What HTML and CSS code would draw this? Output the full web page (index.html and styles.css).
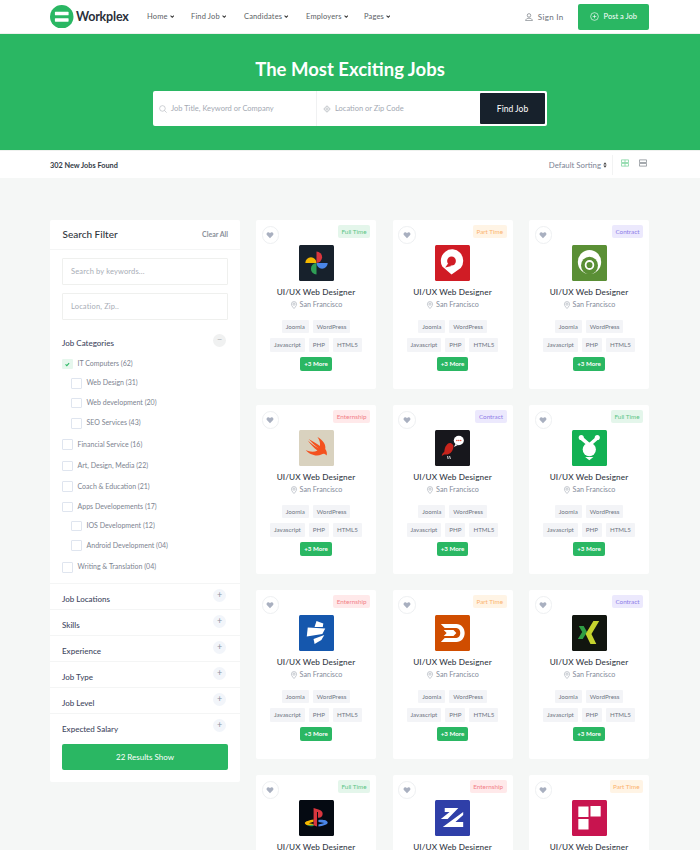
FILE: index.html
```html
<!DOCTYPE html>
<html lang="en">
<head>
<meta charset="utf-8">
<title>Workplex</title>
<link rel="stylesheet" href="styles.css">
</head>
<body>
<svg class="defs" width="0" height="0" aria-hidden="true">
  <symbol id="heart" viewBox="0 0 16 16"><path d="M8 14.500 2.200 8.600C.5 6.800.9 3.800 3 2.800c1.900-.9 3.700-.1 5 1.700 1.300-1.800 3.100-2.600 5-1.700 2.100 1 2.500 4 .8 5.800z"/></symbol>
  <symbol id="pin" viewBox="0 0 16 16"><path d="M8 15S2.800 10 2.800 6.300a5.200 5.200 0 0 1 10.400 0C13.200 10 8 15 8 15z" fill="none" stroke="currentColor" stroke-width="1.100"/><circle cx="8" cy="6.300" r="2.200" fill="none" stroke="currentColor" stroke-width="1.100"/></symbol>
  <symbol id="chev" viewBox="0 0 8 8"><path d="M1 2.500 4 5.500 7 2.500" fill="none" stroke="currentColor" stroke-width="1.800"/></symbol>
</svg>

<header class="topbar">
  <div class="brand">
    <svg class="brand-mark" viewBox="0 0 24 24"><circle cx="12" cy="12" r="12" fill="#2ab763"/><rect x="5" y="7" width="14" height="3.500" rx=".6" fill="#fff"/><rect x="5" y="13.500" width="14" height="3.500" rx=".6" fill="#fff"/></svg>
    <span class="brand-name">Workplex</span>
  </div>
  <nav class="nav">
    <a class="nav-home">Home <svg class="chev"><use href="#chev"/></svg></a>
    <a class="nav-find">Find Job <svg class="chev"><use href="#chev"/></svg></a>
    <a class="nav-cand">Candidates <svg class="chev"><use href="#chev"/></svg></a>
    <a class="nav-emp">Employers <svg class="chev"><use href="#chev"/></svg></a>
    <a>Pages <svg class="chev"><use href="#chev"/></svg></a>
  </nav>
  <a class="signin">
    <svg class="signin-icon" viewBox="0 0 10 10"><circle cx="5" cy="3" r="2.200" fill="none" stroke="currentColor" stroke-width=".8"/><path d="M.8 9.500c.3-2.200 2-3 4.200-3s3.900.8 4.200 3z" fill="none" stroke="currentColor" stroke-width=".8"/></svg>
    Sign In
  </a>
  <a class="post">
    <svg class="post-icon" viewBox="0 0 10 10"><circle cx="5" cy="5" r="4.300" fill="none" stroke="currentColor" stroke-width=".7"/><path d="M5 3v4M3 5h4" stroke="currentColor" stroke-width=".7"/></svg>
    Post a Job
  </a>
</header>

<section class="hero">
  <h1>The Most Exciting Jobs</h1>
  <form class="search">
    <div class="search-field search-title">
      <svg class="search-icon" viewBox="0 0 10 10"><circle cx="4.300" cy="4.300" r="3.500" fill="none" stroke="currentColor" stroke-width=".7"/><path d="M7 7l2.500 2.500" stroke="currentColor" stroke-width=".7"/></svg>
      <span>Job Title, Keyword or Company</span>
    </div>
    <div class="search-field search-loc">
      <svg class="search-icon" viewBox="0 0 10 10"><circle cx="5" cy="5" r="3" fill="none" stroke="currentColor" stroke-width=".8"/><circle cx="5" cy="5" r="1.200" fill="none" stroke="currentColor" stroke-width=".7"/><path d="M5 .5v1.500M5 8v1.500M.5 5H2M8 5h1.500" stroke="currentColor" stroke-width=".7"/></svg>
      <span>Location or Zip Code</span>
    </div>
    <button class="find" type="button">Find Job</button>
  </form>
</section>

<section class="resultbar">
  <strong class="found">302 New Jobs Found</strong>
  <div class="sorting">Default Sorting
    <svg class="updown" viewBox="0 0 6 8"><path d="M3 0 5.500 3.400H.5zM3 8 .5 4.600h5z"/></svg>
  </div>
  <div class="views">
    <svg class="view-icon view-on" viewBox="0 0 9 8"><path d="M.5.500h8v3h-8zM.5 4.500h8v3h-8zM4.500.500v3M4.500 4.500v3" fill="none" stroke="currentColor" stroke-width=".9"/></svg>
    <svg class="view-icon" viewBox="0 0 9 8"><path d="M.5.500h8v3h-8zM.5 4.500h8v3h-8z" fill="none" stroke="currentColor" stroke-width=".9"/></svg>
  </div>
</section>

<main class="content">
  <aside class="filter">
    <div class="filter-head">
      <h2>Search Filter</h2>
      <a class="clear">Clear All</a>
    </div>
    <div class="filter-inputs">
      <div class="text-box">Search by keywords...</div>
      <div class="text-box">Location, Zip..</div>
    </div>
    <div class="cat-block">
      <div class="cat-head"><h3>Job Categories</h3><span class="round round-minus">&#8722;</span></div>
      <ul class="cat-list">
        <li class="row row-first"><span class="box box-on"><svg viewBox="0 0 10 10"><path d="M3 5.200 4.500 6.700 7.200 3.600" fill="none" stroke="#2ab763" stroke-width="1.200"/></svg></span>IT Computers (62)</li>
        <li class="row sub sub-a"><span class="box"></span>Web Design (31)</li>
        <li class="row sub"><span class="box"></span>Web development (20)</li>
        <li class="row sub"><span class="box"></span>SEO Services (43)</li>
        <li class="row row-after"><span class="box"></span>Financial Service (16)</li>
        <li class="row"><span class="box"></span>Art, Design, Media (22)</li>
        <li class="row"><span class="box"></span>Coach &amp; Education (21)</li>
        <li class="row row-tight"><span class="box"></span>Apps Developements (17)</li>
        <li class="row sub sub-a"><span class="box"></span>IOS Development (12)</li>
        <li class="row sub"><span class="box"></span>Android Development (04)</li>
        <li class="row row-last"><span class="box"></span>Writing &amp; Translation (04)</li>
      </ul>
    </div>
    <div class="acc"><h3>Job Locations</h3><span class="round">+</span></div>
    <div class="acc"><h3>Skills</h3><span class="round">+</span></div>
    <div class="acc"><h3>Experience</h3><span class="round">+</span></div>
    <div class="acc"><h3>Job Type</h3><span class="round">+</span></div>
    <div class="acc"><h3>Job Level</h3><span class="round">+</span></div>
    <div class="acc"><h3>Expected Salary</h3><span class="round">+</span></div>
    <button class="results" type="button">22 Results Show</button>
  </aside>

  <div class="cards">

    <article class="card">
      <span class="fav"><svg><use href="#heart"/></svg></span><span class="badge full">Full Time</span>
      <svg class="logo" viewBox="0 0 36 36" preserveAspectRatio="none"><rect width="36" height="36" rx="1.500" fill="#17212c"/><path d="M6.500 18A5.750 5.750 0 0 1 18 18z" fill="#f5b800"/><path d="M18 6.500A5.750 5.750 0 0 1 18 18z" fill="#d9363e"/><path d="M29.500 18A5.750 5.750 0 0 1 18 18z" fill="#4a86e8"/><path d="M18 29.500A5.750 5.750 0 0 1 18 18z" fill="#2f9e55"/></svg>
      <h4>UI/UX Web Designer</h4>
      <p class="place"><svg><use href="#pin"/></svg>San Francisco</p>
      <div class="tags"><span>Joomla</span><span>WordPress</span><span>Javascript</span><span>PHP</span><span>HTML5</span><span class="more">+3 More</span></div>
    </article>

    <article class="card">
      <span class="fav"><svg><use href="#heart"/></svg></span><span class="badge part">Part Time</span>
      <svg class="logo" viewBox="0 0 36 36" preserveAspectRatio="none"><rect width="36" height="36" rx="1.500" fill="#d01c25"/><path d="M17 29.500 7.500 21.500A11.500 11.500 0 1 1 26.500 23z" fill="#fff"/><circle cx="17" cy="16" r="4.500" fill="#d01c25"/><path d="M13.500 18.500 10.500 22.500 17 21z" fill="#d01c25"/></svg>
      <h4>UI/UX Web Designer</h4>
      <p class="place"><svg><use href="#pin"/></svg>San Francisco</p>
      <div class="tags"><span>Joomla</span><span>WordPress</span><span>Javascript</span><span>PHP</span><span>HTML5</span><span class="more">+3 More</span></div>
    </article>

    <article class="card">
      <span class="fav"><svg><use href="#heart"/></svg></span><span class="badge contract">Contract</span>
      <svg class="logo" viewBox="0 0 36 36" preserveAspectRatio="none"><rect width="36" height="36" rx="1.500" fill="#5a8f35"/><circle cx="18" cy="17" r="12" fill="#fff"/><circle cx="18" cy="20.500" r="8.700" fill="#5a8f35"/><circle cx="18" cy="20" r="4" fill="none" stroke="#fff" stroke-width="1.800"/></svg>
      <h4>UI/UX Web Designer</h4>
      <p class="place"><svg><use href="#pin"/></svg>San Francisco</p>
      <div class="tags"><span>Joomla</span><span>WordPress</span><span>Javascript</span><span>PHP</span><span>HTML5</span><span class="more">+3 More</span></div>
    </article>

    <article class="card">
      <span class="fav"><svg><use href="#heart"/></svg></span><span class="badge intern">Enternship</span>
      <svg class="logo" viewBox="0 0 36 36" preserveAspectRatio="none"><rect width="36" height="36" rx="1.500" fill="#d9d2bf"/><path d="M10 9c3 3.500 7 7 10.500 9.500C16.500 16.500 12 13 9 10.500c3 4 7 8 10 10-3.500 1.800-8 1.500-12-.5 3.500 4.500 11 7 16 4.500 2-1 3.500-1 5.500 1 .5-2.500 0-4.500-1.500-6.500 1-4-2-8.500-8-12 2.500 3.500 3 6.500 2.500 9C18.500 14 14 11 10 9z" fill="#f4511e"/></svg>
      <h4>UI/UX Web Designer</h4>
      <p class="place"><svg><use href="#pin"/></svg>San Francisco</p>
      <div class="tags"><span>Joomla</span><span>WordPress</span><span>Javascript</span><span>PHP</span><span>HTML5</span><span class="more">+3 More</span></div>
    </article>

    <article class="card">
      <span class="fav"><svg><use href="#heart"/></svg></span><span class="badge contract">Contract</span>
      <svg class="logo" viewBox="0 0 36 36" preserveAspectRatio="none"><rect width="36" height="36" rx="1.500" fill="#17171c"/><path d="M7 26c0-2 1-3 2.500-4 .5-3 .5-5 2.500-7 1-1.500 3-2.500 5-1.500 2 1 2.500 3 1.500 5.500-1 3-3.500 5.500-6.500 5.500H9.500z" fill="#c8241c"/><path d="M13 26l.5 3M15 26l.8 3" stroke="#fff" stroke-width=".9"/><ellipse cx="24.500" cy="10.500" rx="5.200" ry="4.700" fill="#fff"/><path d="M21 14l-1.500 3 4-2z" fill="#fff"/><circle cx="22.500" cy="10.500" r=".7" fill="#d8402a"/><circle cx="24.500" cy="10.500" r=".7" fill="#d8402a"/><circle cx="26.500" cy="10.500" r=".7" fill="#d8402a"/></svg>
      <h4>UI/UX Web Designer</h4>
      <p class="place"><svg><use href="#pin"/></svg>San Francisco</p>
      <div class="tags"><span>Joomla</span><span>WordPress</span><span>Javascript</span><span>PHP</span><span>HTML5</span><span class="more">+3 More</span></div>
    </article>

    <article class="card">
      <span class="fav"><svg><use href="#heart"/></svg></span><span class="badge full">Full Time</span>
      <svg class="logo" viewBox="0 0 36 36" preserveAspectRatio="none"><rect width="36" height="36" rx="1.500" fill="#12b153"/><path d="M9.500 8 17.800 15 26 8" fill="none" stroke="#fff" stroke-width="3.600"/><circle cx="9.500" cy="7.500" r="2.600" fill="#fff"/><circle cx="26" cy="7.500" r="2.600" fill="#fff"/><circle cx="17.800" cy="19.500" r="6.800" fill="#fff"/><path d="M13.500 27h8.500l-4.200 3.200z" fill="#fff"/></svg>
      <h4>UI/UX Web Designer</h4>
      <p class="place"><svg><use href="#pin"/></svg>San Francisco</p>
      <div class="tags"><span>Joomla</span><span>WordPress</span><span>Javascript</span><span>PHP</span><span>HTML5</span><span class="more">+3 More</span></div>
    </article>

    <article class="card">
      <span class="fav"><svg><use href="#heart"/></svg></span><span class="badge intern">Enternship</span>
      <svg class="logo" viewBox="0 0 36 36" preserveAspectRatio="none"><rect width="36" height="36" rx="1.500" fill="#1557ad"/><path d="M18 6l7 2.500-.5 3.500H16z" fill="#fff"/><path d="M9 12.500l18 1-3 5.500-16 2.500z" fill="#fff"/><path d="M15 24l11-4-3 5-7 4z" fill="#fff"/></svg>
      <h4>UI/UX Web Designer</h4>
      <p class="place"><svg><use href="#pin"/></svg>San Francisco</p>
      <div class="tags"><span>Joomla</span><span>WordPress</span><span>Javascript</span><span>PHP</span><span>HTML5</span><span class="more">+3 More</span></div>
    </article>

    <article class="card">
      <span class="fav"><svg><use href="#heart"/></svg></span><span class="badge part">Part Time</span>
      <svg class="logo" viewBox="0 0 36 36" preserveAspectRatio="none"><rect width="36" height="36" rx="1.500" fill="#d04d00"/><path d="M6 9h16c5 0 8.500 4 8.500 9s-3.500 9-8.500 9H6l4-4h12c2.500 0 4-2.200 4-5s-1.500-5-4-5H10z" fill="#fff"/><path d="M9 15h10l3 3-3 3H9l3-3z" fill="#fff"/></svg>
      <h4>UI/UX Web Designer</h4>
      <p class="place"><svg><use href="#pin"/></svg>San Francisco</p>
      <div class="tags"><span>Joomla</span><span>WordPress</span><span>Javascript</span><span>PHP</span><span>HTML5</span><span class="more">+3 More</span></div>
    </article>

    <article class="card">
      <span class="fav"><svg><use href="#heart"/></svg></span><span class="badge contract">Contract</span>
      <svg class="logo" viewBox="0 0 36 36" preserveAspectRatio="none"><rect width="36" height="36" rx="1.500" fill="#11150f"/><path d="M7 11h5l3.500 6-4.500 7H6l4.500-7z" fill="#2f9e44"/><path d="M22 6h6l-8 13 5 10h-6l-5-10z" fill="#c5d32e"/></svg>
      <h4>UI/UX Web Designer</h4>
      <p class="place"><svg><use href="#pin"/></svg>San Francisco</p>
      <div class="tags"><span>Joomla</span><span>WordPress</span><span>Javascript</span><span>PHP</span><span>HTML5</span><span class="more">+3 More</span></div>
    </article>

    <article class="card">
      <span class="fav"><svg><use href="#heart"/></svg></span><span class="badge full">Full Time</span>
      <svg class="logo" viewBox="0 0 36 36" preserveAspectRatio="none"><rect width="36" height="36" rx="1.500" fill="#050a12"/><path d="M6 23c0-1.500 5-3 9-3.500v2.200l-5 1.500 5 .8v1.500C10 26 6 25 6 23z" fill="#f5b800"/><path d="M8.500 25.500 15 24.500V26c-2.500.5-5 .3-6.500-.5z" fill="#2f9e55"/><path d="M20 20c4-.5 9 0 9.500 2.500.3 2-5 3.500-9.500 4v-2l6-1.500-6-1z" fill="#4a86e8"/><path d="M15 8l5 1.500c4 1.200 5 3.500 4 6-1 2-3 2.500-4.500 2V12h-1v14.500L15 25.300z" fill="#d9363e"/></svg>
      <h4>UI/UX Web Designer</h4>
      <p class="place"><svg><use href="#pin"/></svg>San Francisco</p>
      <div class="tags"><span>Joomla</span><span>WordPress</span><span>Javascript</span><span>PHP</span><span>HTML5</span><span class="more">+3 More</span></div>
    </article>

    <article class="card">
      <span class="fav"><svg><use href="#heart"/></svg></span><span class="badge intern">Enternship</span>
      <svg class="logo" viewBox="0 0 36 36" preserveAspectRatio="none"><rect width="36" height="36" rx="1.500" fill="#2f3fa8"/><path d="M10 8h14l-11 11H6l9-7h-5z" fill="#fff"/><path d="M29 12v3l-8 7h8v5H8z" fill="#fff"/></svg>
      <h4>UI/UX Web Designer</h4>
      <p class="place"><svg><use href="#pin"/></svg>San Francisco</p>
      <div class="tags"><span>Joomla</span><span>WordPress</span><span>Javascript</span><span>PHP</span><span>HTML5</span><span class="more">+3 More</span></div>
    </article>

    <article class="card">
      <span class="fav"><svg><use href="#heart"/></svg></span><span class="badge part">Part Time</span>
      <svg class="logo" viewBox="0 0 36 36" preserveAspectRatio="none"><rect width="36" height="36" rx="1.500" fill="#c8144f"/><rect x="6.500" y="6.500" width="10.500" height="10.500" fill="#fff"/><rect x="19" y="6" width="10.500" height="10.500" fill="#fff"/><rect x="6.500" y="19" width="10.500" height="10.500" fill="#fff"/></svg>
      <h4>UI/UX Web Designer</h4>
      <p class="place"><svg><use href="#pin"/></svg>San Francisco</p>
      <div class="tags"><span>Joomla</span><span>WordPress</span><span>Javascript</span><span>PHP</span><span>HTML5</span><span class="more">+3 More</span></div>
    </article>

  </div>
</main>
</body>
</html>
```
FILE: styles.css
```css
* { box-sizing: border-box; }
html, body { margin: 0; height: 850px; overflow: hidden; }
body { background: #f5f7f6; font-family: Lato, "Noto Sans", sans-serif; color: #4a5366; }
h1, h2, h3, h4, p, ul { margin: 0; padding: 0; }
ul { list-style: none; }
button { font-family: inherit; border: 0; cursor: pointer; }
.defs { position: absolute; }

.topbar { height: 34px; background: #fff; display: flex; align-items: center; padding: 0 51px 0 50px; border-bottom: 1px solid #eef1ee; }
.brand { display: flex; align-items: center; gap: 2.500px; width: 97px; }
.brand-mark { width: 23.500px; height: 23.500px; }
.brand-name { font-size: 12.500px; font-weight: 700; color: #2a2f3a; letter-spacing: -.2px; }
.nav { display: flex; font-size: 7.500px; color: #5c5f66; letter-spacing: .15px; }
.nav a { display: flex; align-items: center; gap: 2px; white-space: nowrap; }
.nav-home { width: 44px; }
.nav-find { width: 53px; }
.nav-cand { width: 62px; }
.nav-emp { width: 58px; }
.chev { width: 4.500px; height: 5px; color: #333; }
.signin { margin-left: auto; display: flex; align-items: center; gap: 5px; font-size: 8px; color: #6a7078; letter-spacing: .3px; }
.signin-icon { width: 8px; height: 8px; }
.post { margin-left: 14px; width: 71.500px; height: 26px; background: #2ab763; border-radius: 2px; color: #fff; font-size: 7.500px; display: flex; align-items: center; justify-content: center; gap: 5px; }
.post-icon { width: 9px; height: 9px; }

.hero { height: 117px; background: #2ab763; padding-top: 24px; display: flex; flex-direction: column; align-items: center; border-bottom: 1px solid #eef1ee; }
.hero h1 { font-size: 18.500px; line-height: 22px; font-weight: 700; color: #fff; }
.search { margin-top: 11px; width: 394px; height: 35px; background: #fff; border-radius: 2px; display: flex; align-items: center; padding-right: 2px; }
.search-field { height: 100%; display: flex; align-items: center; gap: 4px; font-size: 7.500px; color: #a3a9b3; padding-left: 6px; }
.search-title { width: 164px; border-right: 1px solid #f0f1f2; }
.search-loc { width: 163px; }
.search-icon { width: 8px; height: 8px; color: #a9aeb5; }
.find { width: 65px; height: 31px; background: #17212c; color: #fff; font-size: 8.500px; border-radius: 1px; }

.resultbar { height: 27px; background: #fff; display: flex; align-items: center; padding: 2px 53px 0 50px; }
.found { font-size: 7.300px; font-weight: 700; color: #333a45; }
.sorting { margin-left: auto; font-size: 7.800px; color: #7c8494; display: flex; align-items: center; gap: 2px; margin-top: -1px; }
.updown { width: 4px; height: 6px; fill: #444; }
.views { margin-left: 5px; height: 20px; padding-left: 8px; border-left: 1px solid #f2f3f3; display: flex; align-items: center; gap: 10px; margin-top: -2px; }
.view-icon { width: 8px; height: 8px; color: #8a8f95; margin-top: -3px; }
.view-on { color: #7fd4a0; }

.content { padding: 42px 51px 0 50px; display: grid; grid-template-columns: 190px 393px; gap: 16px; align-items: start; }

.filter { background: #fff; border-radius: 2px; height: 562px; }
.filter-head { height: 30px; padding: 0 12px 2px; border-bottom: 1px solid #f4f5f5; display: flex; align-items: center; justify-content: space-between; }
.filter-head h2 { font-size: 10px; font-weight: 500; color: #2f343b; margin-left: .5px; }
.clear { font-size: 7px; font-weight: 700; color: #8a8f99; }
.filter-inputs { padding: 8px 12px 0; display: flex; flex-direction: column; gap: 8px; }
.text-box { height: 27px; border: 1px solid #eff0ee; border-radius: 1px; padding-left: 8px; display: flex; align-items: center; font-size: 7.500px; color: #a8adb6; letter-spacing: .15px; }
.cat-block { padding: 15px 12px 0; height: 264px; border-bottom: 1px solid #f4f5f5; }
.cat-head { display: flex; justify-content: space-between; align-items: flex-start; height: 16px; padding-right: 2px; }
.cat-head h3, .acc h3 { font-size: 8px; font-weight: 500; color: #3f4862; line-height: 14px; padding-top: 1px; }
.round { width: 13px; height: 13px; border-radius: 50%; background: #f2f5fa; color: #8b93a3; font-size: 9px; line-height: 12px; text-align: center; }
.round-minus { background: #f0f1f1; color: #b3b6b9; margin-top: -1px; }
.cat-list { margin-top: 2px; }
.row { display: flex; align-items: center; gap: 5px; height: 20.700px; font-size: 7px; color: #7d8390; }
.row-first { height: 20px; }
.row-tight { height: 20px; }
.box { width: 10.500px; height: 10.500px; margin-top: 2px; border: 1px solid #dfe5ef; border-radius: 1px; background: #fff; flex: none; }
.box svg { display: block; width: 8.500px; height: 8.500px; }
.box-on { background: #e6f7ed; border-color: #e6f7ed; }
.sub { padding-left: 9px; height: 20.500px; }
.sub-a { height: 18.500px; }
.row-after { height: 22px; }
.row-last { height: 23px; }
.acc { height: 26px; padding: 7.500px 14px 0 12px; display: flex; justify-content: space-between; align-items: flex-start; border-bottom: 1px solid #f4f5f5; }
.acc h3 { padding-top: 0; }
.acc .round { margin-top: -2.500px; }
.acc:last-of-type { border-bottom: 0; }
.results { display: block; margin: 4px 12px 0; width: 166px; height: 25.500px; background: #2ab763; border-radius: 2px; color: #fff; font-size: 8px; }

.cards { display: grid; grid-template-columns: repeat(3, 120px); gap: 16px 16.500px; }
.card { position: relative; height: 169px; background: #fff; border-radius: 2px; padding-top: 25px; display: flex; flex-direction: column; align-items: center; }
.fav { position: absolute; left: 5.500px; top: 6px; width: 17.500px; height: 17.500px; border: 1px solid #eef0f2; border-radius: 50%; display: flex; align-items: center; justify-content: center; }
.fav svg { width: 8px; height: 8px; fill: #a9b0c0; }
.badge { position: absolute; right: 6px; top: 5px; height: 13px; padding: 0 3.500px; border-radius: 2px; font-size: 6.300px; line-height: 13px; }
.full { background: #e4f6eb; color: #5ac584; }
.part { background: #fff4e5; color: #fbb26e; }
.contract { background: #ece9fd; color: #8f7de8; }
.intern { background: #ffe9ea; color: #f27f87; }
.logo { width: 35px; height: 36px; display: block; }
.card h4 { margin-top: 4.500px; font-size: 8.200px; line-height: 12px; font-weight: 500; color: #333945; letter-spacing: .1px; }
.place { margin-top: 1.500px; display: flex; align-items: center; gap: 2px; font-size: 7.200px; line-height: 11px; color: #858c9b; }
.place svg { width: 8px; height: 8px; color: #9ba1ad; }
.tags { margin-top: 10px; display: flex; flex-wrap: wrap; justify-content: center; gap: 5px 4px; padding: 0 10px; }
.tags span { height: 13.300px; padding: 0 4px; background: #f3f4f7; border-radius: 1px; font-size: 6.200px; line-height: 13.300px; color: #6e7482; }
.tags .more { background: #2ab763; color: #fff; font-weight: 700; padding: 0 4px; height: 14px; line-height: 14px; border-radius: 2px; }
```
